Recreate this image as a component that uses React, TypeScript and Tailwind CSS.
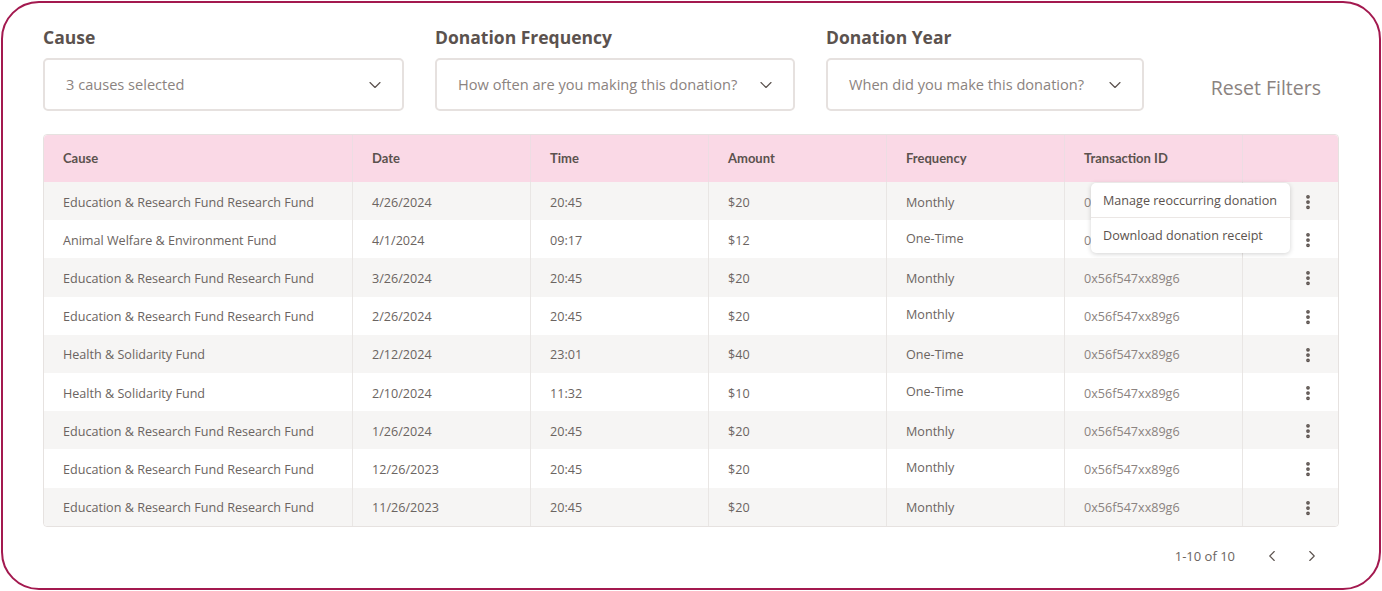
import { ChevronDown, ChevronLeft, ChevronRight, EllipsisVertical } from "lucide-react";

const rows = [
    { cause: "Education & Research Fund Research Fund", date: "4/26/2024", time: "20:45", amount: "$20", freq: "Monthly" },
    { cause: "Animal Welfare & Environment Fund", date: "4/1/2024", time: "09:17", amount: "$12", freq: "One-Time" },
    { cause: "Education & Research Fund Research Fund", date: "3/26/2024", time: "20:45", amount: "$20", freq: "Monthly" },
    { cause: "Education & Research Fund Research Fund", date: "2/26/2024", time: "20:45", amount: "$20", freq: "Monthly" },
    { cause: "Health & Solidarity Fund", date: "2/12/2024", time: "23:01", amount: "$40", freq: "One-Time" },
    { cause: "Health & Solidarity Fund", date: "2/10/2024", time: "11:32", amount: "$10", freq: "One-Time" },
    { cause: "Education & Research Fund Research Fund", date: "1/26/2024", time: "20:45", amount: "$20", freq: "Monthly" },
    { cause: "Education & Research Fund Research Fund", date: "12/26/2023", time: "20:45", amount: "$20", freq: "Monthly" },
    { cause: "Education & Research Fund Research Fund", date: "11/26/2023", time: "20:45", amount: "$20", freq: "Monthly" },
];

const cols = "grid grid-cols-[309px_178px_178px_178px_178px_178px_1fr]";

function Filter({ label, value, width }: { label: string; value: string; width: string }) {
    return (
        <div className={`flex flex-col gap-[9px] ${width}`}>
            <div className="text-[17.5px] leading-[24px] font-bold text-[#5b524e]">{label}</div>
            <div className="h-[53px] border-2 border-[#e6e1df] rounded-[5px] flex items-center justify-between pl-[21px] pr-[17px]">
                <span className="text-[14.6px] text-[#8b8380]">{value}</span>
                <ChevronDown className="w-[20px] h-[20px] text-[#5b524e]" strokeWidth={1.4} />
            </div>
        </div>
    );
}

export default function App() {
    return (
        <div className="w-[1382px] h-[591px] bg-white p-px font-['Open_Sans',sans-serif]">
            <div className="h-[589px] border-2 border-[#a3194f] rounded-[38px] px-[40px] pt-[22px]">
                {/* Filters */}
                <div className="flex items-end gap-[31px]">
                    <Filter label="Cause" value="3 causes selected" width="w-[361px]" />
                    <Filter label="Donation Frequency" value="How often are you making this donation?" width="w-[360px]" />
                    <Filter label="Donation Year" value="When did you make this donation?" width="w-[318px]" />
                    <div className="flex-1 flex justify-end h-[53px] items-center pr-[18px] pt-[6px]">
                        <span className="text-[19.5px] text-[#8b8380]">Reset Filters</span>
                    </div>
                </div>

                {/* Table */}
                <div className="relative mt-[23px] w-[1296px] border border-[#e6e2e0] rounded-[4px] overflow-visible">
                    <div className={`${cols} h-[47px] bg-[#fad9e6] rounded-t-[4px] text-[13px] font-bold text-[#5b524e] font-['Lato',sans-serif]`}>
                        {["Cause", "Date", "Time", "Amount", "Frequency", "Transaction ID", ""].map((h, i) => (
                            <div key={i} className={`flex items-center pl-[19px] pt-px ${i < 6 ? "border-r border-[#eddde3]" : ""}`}>{h}</div>
                        ))}
                    </div>
                    {rows.map((r, i) => (
                        <div key={i} className={`${cols} h-[38.2px] text-[12.6px] text-[#6b6461] ${i % 2 === 0 ? "bg-[#f6f5f4]" : "bg-white"} ${i === rows.length - 1 ? "rounded-b-[4px]" : ""}`}>
                            <div className="flex items-center pl-[19px] pt-[4px] border-r border-[#e9e6e4]">{r.cause}</div>
                            <div className="flex items-center pl-[19px] pt-[4px] border-r border-[#e9e6e4]">{r.date}</div>
                            <div className="flex items-center pl-[19px] pt-[4px] border-r border-[#e9e6e4]">{r.time}</div>
                            <div className="flex items-center pl-[19px] pt-[4px] border-r border-[#e9e6e4]">{r.amount}</div>
                            <div className={`flex items-center pl-[19px] border-r border-[#e9e6e4] ${i % 2 === 0 ? "pt-[4px]" : "pt-0"}`}>{r.freq}</div>
                            <div className="flex items-center pl-[19px] pt-[4px] border-r border-[#e9e6e4] text-[#8b8380]">0x56f547xx89g6</div>
                            <div className="flex items-center justify-center pl-[34px] pt-[2px]">
                                <EllipsisVertical className="w-[18px] h-[18px] text-[#5b524e]" strokeWidth={3} />
                            </div>
                        </div>
                    ))}

                    {/* Row menu */}
                    <div className="absolute left-[1047px] top-[48px] w-[199px] bg-white rounded-[5px] shadow-[0_1px_5px_rgba(0,0,0,0.18)] text-[12.6px] text-[#5b524e] whitespace-nowrap">
                        <div className="h-[35px] flex items-center px-[12px] pt-[3px] border-b border-[#ebe7e5]">Manage reoccurring donation</div>
                        <div className="h-[35px] flex items-center px-[12px] pt-[2px]">Download donation receipt</div>
                    </div>
                </div>

                {/* Pagination */}
                <div className="w-[1296px] flex items-center justify-end mt-[20px] pr-[18px] text-[13px] text-[#6b6461]">
                    <span>1-10 of 10</span>
                    <ChevronLeft className="w-[18px] h-[18px] ml-[28px] text-[#5b524e]" strokeWidth={1.5} />
                    <ChevronRight className="w-[18px] h-[18px] ml-[22px] text-[#5b524e]" strokeWidth={1.5} />
                </div>
            </div>
        </div>
    );
}
